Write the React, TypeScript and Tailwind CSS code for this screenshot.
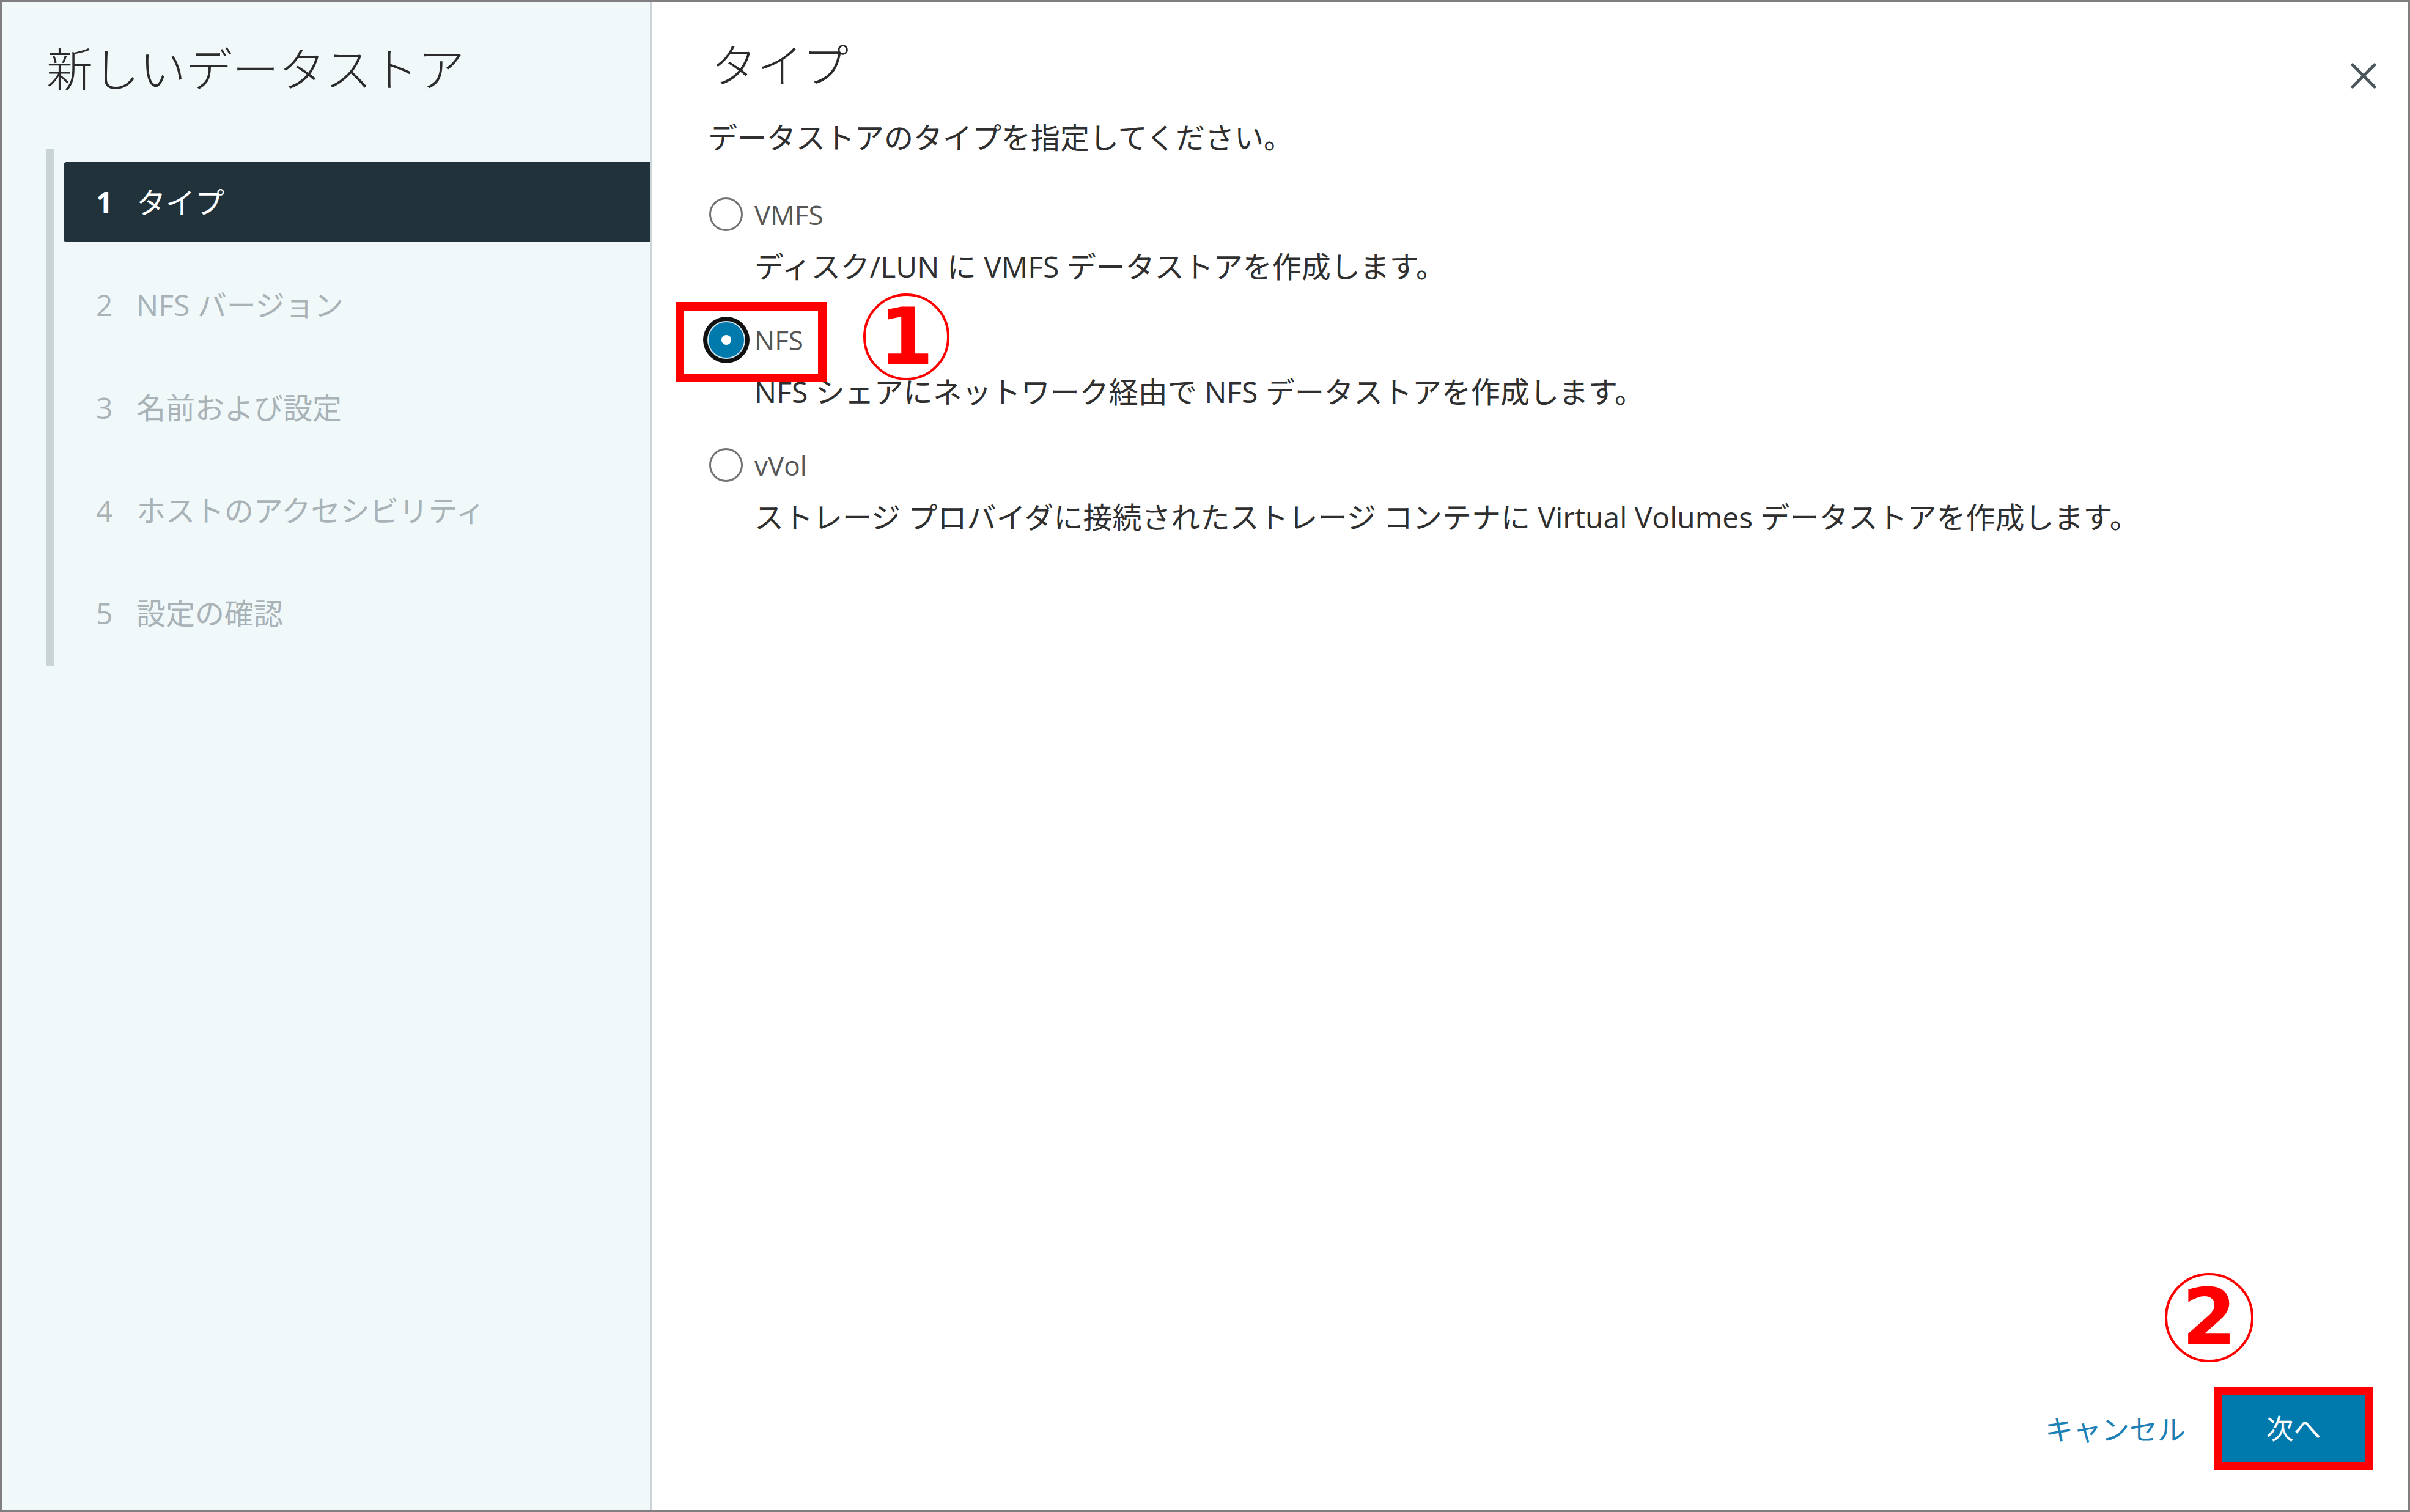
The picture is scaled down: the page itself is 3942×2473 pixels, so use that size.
const FONT = "font-['Open_Sans','Noto_Sans_CJK_JP',sans-serif]";

type Step = { no: number; label: string };

const steps: Step[] = [
  { no: 1, label: "タイプ" },
  { no: 2, label: "NFS バージョン" },
  { no: 3, label: "名前および設定" },
  { no: 4, label: "ホストのアクセシビリティ" },
  { no: 5, label: "設定の確認" },
];

type Option = { id: string; label: string; desc: string };

const options: Option[] = [
  { id: "vmfs", label: "VMFS", desc: "ディスク/LUN に VMFS データストアを作成します。" },
  { id: "nfs", label: "NFS", desc: "NFS シェアにネットワーク経由で NFS データストアを作成します。" },
  {
    id: "vvol",
    label: "vVol",
    desc: "ストレージ プロバイダに接続されたストレージ コンテナに Virtual Volumes データストアを作成します。",
  },
];

function Radio({ checked }: { checked: boolean }) {
  return (
    <div className="ml-[2px] flex h-[55px] w-[55px] shrink-0 items-center justify-center">
      {checked ? (
        <div className="flex h-[76px] w-[76px] shrink-0 items-center justify-center rounded-full bg-[#111111]">
          <div className="flex h-[62px] w-[62px] items-center justify-center rounded-full border-[2px] border-[#cfe6f0] bg-[#0079ad]">
            <div className="h-[16px] w-[16px] rounded-full bg-white" />
          </div>
        </div>
      ) : (
        <div className="h-[55px] w-[55px] rounded-full border-[3px] border-[#737373] bg-white" />
      )}
    </div>
  );
}

function CircledNumber({ n, className }: { n: string; className: string }) {
  return (
    <div
      className={`absolute flex items-center justify-center rounded-full border-[4px] border-[#ff0000] font-['DejaVu_Sans',sans-serif] text-[128px] font-bold leading-none text-[#ff0000] ${className}`}
    >
      {n}
    </div>
  );
}

export default function App() {
  const selected = "nfs";

  return (
    <div className={`flex h-[2473px] w-[3942px] border-[3px] border-[#7f7f7f] bg-white ${FONT}`}>
      {/* wizard steps */}
      <aside className="flex w-[1063px] shrink-0 flex-col border-r-[3px] border-[#cbd5d8] bg-[#f1f8fa]">
        <h1 className="ml-[73px] mt-[72px] text-[76px] font-light leading-[76px] text-[#2b2b2b]">
          新しいデータストア
        </h1>
        <nav className="ml-[73px] mt-[93px] flex flex-col gap-[37px] border-l-[12px] border-[#c8d4d6] pb-[21px] pl-[16px] pt-[21px]">
          {steps.map((s) => {
            const active = s.no === 1;
            return (
              <div
                key={s.no}
                className={`flex h-[131px] items-center rounded-l-[5px] pl-[53px] text-[48px] leading-[48px] ${
                  active ? "bg-[#21323b] text-white" : "text-[#a9b3b7]"
                }`}
              >
                <span className={`w-[66px] shrink-0 ${active ? "font-bold" : ""}`}>{s.no}</span>
                <span>{s.label}</span>
              </div>
            );
          })}
        </nav>
      </aside>

      {/* content */}
      <main className="flex flex-1 flex-col pl-[92px]">
        <div className="flex items-start justify-between pr-[52px] pt-[66px]">
          <h2 className="ml-[5px] text-[75px] font-light leading-[75px] text-[#2b2b2b]">タイプ</h2>
          <button className="mt-[34px]">
            <svg width="42" height="42" viewBox="0 0 42 42">
              <path d="M3 3L39 39M39 3L3 39" stroke="#4a575d" strokeWidth="5" strokeLinecap="round" />
            </svg>
          </button>
        </div>

        <p className="mt-[56px] text-[48px] leading-[48px] text-[#2f2f2f]">
          データストアのタイプを指定してください。
        </p>

        <div className="mt-[74px] flex flex-col gap-[68px]">
          {options.map((o) => (
            <div key={o.id} className="relative flex flex-col">
              <div className="flex h-[55px] items-center">
                <Radio checked={o.id === selected} />
                <span className="ml-[19px] text-[44px] leading-[44px] text-[#565656]">{o.label}</span>
              </div>
              <div className="ml-[76px] mt-[34px] text-[48px] leading-[48px] text-[#2f2f2f]">{o.desc}</div>
              {o.id === selected && (
                <>
                  <div className="absolute left-[-53px] top-[-34px] h-[131px] w-[247px] border-[14px] border-[#ff0000]" />
                  <CircledNumber n="1" className="left-[254px] top-[-48px] h-[142px] w-[141px]" />
                </>
              )}
            </div>
          ))}
        </div>

        <div className="mt-auto flex items-center justify-end gap-[60px] pb-[79px] pr-[71px]">
          <button className="text-[46px] leading-[46px] text-[#1b80b5]">キャンセル</button>
          <button className="relative flex h-[109px] w-[233px] items-center justify-center bg-[#0079ad] text-[45px] leading-[45px] text-white">
            次へ
            <div className="absolute -inset-[14px] border-[14px] border-[#ff0000]" />
            <CircledNumber n="2" className="left-[-94px] top-[-200px] h-[146px] w-[145px]" />
          </button>
        </div>
      </main>
    </div>
  );
}
